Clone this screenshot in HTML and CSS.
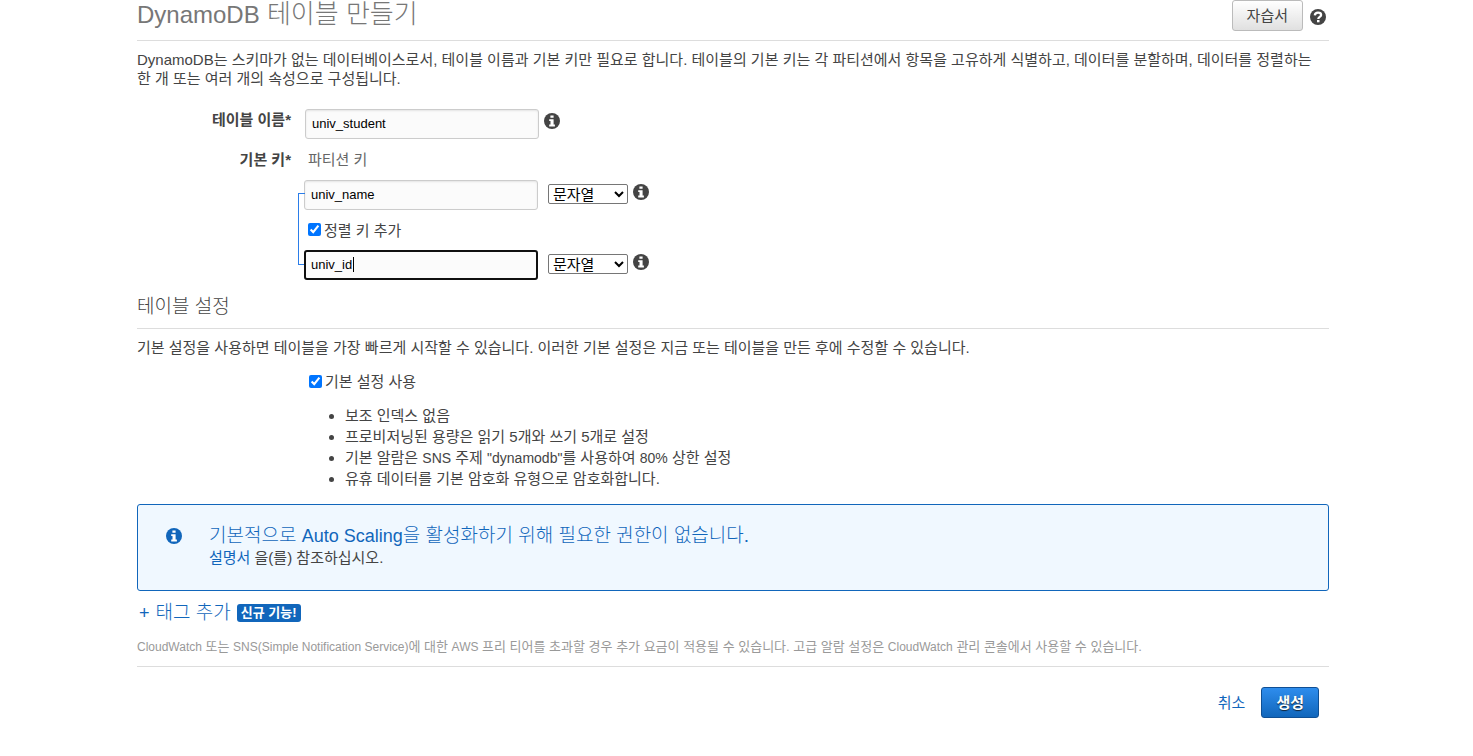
FILE: index.html
```html
<!DOCTYPE html>
<html lang="ko">
<head>
<meta charset="utf-8">
<meta name="viewport" content="width=device-width, initial-scale=1">
<title>DynamoDB 테이블 만들기</title>
<link rel="stylesheet" href="styles.css">
</head>
<body>
<svg class="sprite" aria-hidden="true">
  <symbol id="info" viewBox="0 0 16 16"><circle cx="8" cy="8" r="8" fill="currentColor"/><path fill="#fff" d="M6.400 2.400h3.200v2.400H6.400zM5.200 6.200h4.400v5.400h1.300v1.800H5.200v-1.800h1.300V8H5.200z"/></symbol>
  <symbol id="help" viewBox="0 0 16 16"><circle cx="8" cy="8" r="8" fill="currentColor"/><path fill="none" stroke="#fff" stroke-width="2.300" d="M4.800 6.300C5 4.500 6.300 3.700 8 3.700c1.900 0 3.100.900 3.100 2.300 0 1.900-2.800 1.900-2.800 3.900"/><path fill="#fff" d="M7 11h2.500v2.300H7z"/></symbol>
</svg>
<main class="page">
  <header class="header">
    <h1 class="title"><span class="title-en">DynamoDB</span> 테이블 만들기</h1>
    <div class="header-actions">
      <button class="button" type="button">자습서</button>
      <svg class="icon" role="img" aria-label="도움말"><use href="#help"/></svg>
    </div>
  </header>
  <p class="intro">DynamoDB는 스키마가 없는 데이터베이스로서, 테이블 이름과 기본 키만 필요로 합니다. 테이블의 기본 키는 각 파티션에서 항목을 고유하게 식별하고, 데이터를 분할하며, 데이터를 정렬하는 한 개 또는 여러 개의 속성으로 구성됩니다.</p>

  <form class="form" id="create-form">
    <label class="label" for="table-name">테이블 이름*</label>
    <div class="row name-row">
      <input class="input" id="table-name" type="text" value="univ_student">
      <svg class="icon" aria-hidden="true"><use href="#info"/></svg>
    </div>
    <span class="label">기본 키*</span>
    <label class="key-title" for="partition-key">파티션 키</label>
    <div class="keys">
      <div class="row">
        <input class="input" id="partition-key" type="text" value="univ_name">
        <select class="select" aria-label="파티션 키 유형"><option>문자열</option></select>
        <svg class="icon" aria-hidden="true"><use href="#info"/></svg>
      </div>
      <label class="check"><input class="checkbox" type="checkbox" checked>정렬 키 추가</label>
      <div class="row">
        <span class="field"><input class="input" id="sort-key" type="text" value="univ_id" aria-label="정렬 키"></span>
        <select class="select" aria-label="정렬 키 유형"><option>문자열</option></select>
        <svg class="icon" aria-hidden="true"><use href="#info"/></svg>
      </div>
    </div>
  </form>

  <h2 class="section-title">테이블 설정</h2>
  <p class="settings-text">기본 설정을 사용하면 테이블을 가장 빠르게 시작할 수 있습니다. 이러한 기본 설정은 지금 또는 테이블을 만든 후에 수정할 수 있습니다.</p>
  <div class="defaults">
    <label class="check"><input class="checkbox" type="checkbox" checked>기본 설정 사용</label>
    <ul class="list">
      <li>보조 인덱스 없음</li>
      <li>프로비저닝된 용량은 읽기 5개와 쓰기 5개로 설정</li>
      <li>기본 알람은 <span class="en">SNS</span> 주제 <span class="en">"dynamodb"</span>를 사용하여 <span class="en">80%</span> 상한 설정</li>
      <li>유휴 데이터를 기본 암호화 유형으로 암호화합니다.</li>
    </ul>
  </div>

  <section class="alert">
    <svg class="icon" aria-hidden="true"><use href="#info"/></svg>
    <div>
      <h3 class="alert-title">기본적으로 <span class="alert-en">Auto Scaling</span>을 활성화하기 위해 필요한 권한이 없습니다.</h3>
      <p class="alert-text"><a class="link" href="#">설명서</a> 을(를) 참조하십시오.</p>
    </div>
  </section>

  <div class="tags"><button class="tag-button" type="button"><span class="plus">+</span>태그 추가</button><span class="badge">신규 기능!</span></div>
  <p class="note"><span class="note-en">CloudWatch</span> 또는 <span class="note-en">SNS(Simple Notification Service)</span>에 대한 <span class="note-en">AWS</span> 프리 티어를 초과할 경우 추가 요금이 적용될 수 있습니다. 고급 알람 설정은 <span class="note-en">CloudWatch</span> 관리 콘솔에서 사용할 수 있습니다.</p>
  <footer class="footer">
    <a class="link" href="#">취소</a>
    <button class="button primary" type="submit" form="create-form">생성</button>
  </footer>
</main>
<script src="script.js"></script>
</body>
</html>
```
FILE: styles.css
```css
* { box-sizing: border-box; }
body {
  margin: 0;
  background: #fff;
  color: #444;
  font: 400 15px/19px "Liberation Sans", "Noto Sans CJK KR", sans-serif;
}
h1, h2, h3, p, ul { margin: 0; font-weight: inherit; }
button, input, select { font-family: inherit; font-weight: inherit; }
.sprite { display: none; }
.page { padding: 0 144px 24px 137px; }
.icon { width: 16px; height: 16px; flex: none; color: #444; }
.en { font-size: 14px; line-height: 1; }

.header {
  display: flex;
  justify-content: space-between;
  align-items: flex-start;
  height: 41px;
  border-bottom: 1px solid #ddd;
}
.title { font-size: 26px; font-weight: 300; line-height: 28px; color: #777; }
.title-en { font-size: 24px; line-height: 1; }
.header-actions { display: flex; align-items: center; gap: 7px; padding-right: 3px; }
.header-actions .icon { margin-top: 3px; }
.button {
  height: 31px;
  padding: 0 14px 3px;
  border: 1px solid #bbb;
  border-radius: 3px;
  background: linear-gradient(#fff, #e0e0e0);
  color: #444;
  font-size: 15px;
}
.intro { margin-top: 9px; padding-right: 12px; word-break: keep-all; }

.form {
  display: grid;
  grid-template-columns: 154px 1fr;
  column-gap: 13px;
  margin-top: 21px;
}
.label { padding-top: 1px; text-align: right; font-weight: 700; }
.row { display: flex; align-items: center; height: 30px; }
.name-row { padding-left: 1px; }
.row .icon { margin: 0 0 6px 5px; }
.input {
  width: 234px;
  height: 30px;
  padding: 0 6px 2px;
  border: 1px solid #ccc;
  border-radius: 3px;
  background: #fbfbfb;
  box-shadow: inset 0 1px 2px #e4e4e4;
  color: #000;
  font-size: 13px;
}
.input:focus {
  padding: 0 5px 2px;
  border: 2px solid #101010;
  outline: none;
  box-shadow: none;
  caret-color: transparent;
}
.field { position: relative; display: flex; }
.field:focus-within::after {
  content: "";
  position: absolute;
  left: 49px;
  top: 7px;
  width: 1px;
  height: 15px;
  background: #000;
}
.form > span.label, .key-title { padding-top: 11px; }
.key-title { padding-left: 4px; color: #666; }
.keys { grid-column: 2; position: relative; margin-top: 11px; }
.keys::before {
  content: "";
  position: absolute;
  left: -6px;
  top: 13px;
  bottom: 15px;
  width: 6px;
  border: 1px solid #2b7de9;
  border-right: 0;
}
.select {
  width: 80px;
  height: 20px;
  margin: 0 0 2px 10px;
  padding: 0 0 1px;
  border: 1px solid #767676;
  border-radius: 2px;
  background: #fff;
  color: #000;
  font-size: 15px;
  line-height: 18px;
}
.check { display: flex; align-items: center; gap: 3px; }
.checkbox { width: 13px; height: 13px; margin: 0 0 1px; accent-color: #0075ff; }
.keys .check { height: 40px; padding-left: 4px; }

.section-title {
  margin-top: 12px;
  padding-bottom: 7px;
  border-bottom: 1px solid #ddd;
  font-size: 19px;
  font-weight: 300;
  line-height: 29px;
}
.settings-text { margin-top: 9px; }
.defaults { padding: 15px 0 0 172px; }
.list { margin-top: 14px; padding-left: 36px; line-height: 21px; }

.alert {
  display: flex;
  gap: 27px;
  min-height: 87px;
  margin-top: 15px;
  padding: 19px 28px;
  border: 1px solid #1166bb;
  border-radius: 3px;
  background: #f0f8ff;
}
.alert .icon { margin-top: 4px; color: #1166bb; }
.alert-title { font-size: 19px; font-weight: 300; line-height: 24px; color: #1166bb; }
.alert-en { font-size: 18px; line-height: 1; }
.link { color: #1166bb; text-decoration: none; }
.tags { display: flex; align-items: center; gap: 6px; margin-top: 8px; }
.tag-button {
  padding: 0 0 0 2px;
  border: 0;
  background: none;
  color: #1166bb;
  font-size: 19px;
  font-weight: 300;
  line-height: 28px;
}
.plus { margin-right: 6px; font-size: 18px; line-height: 1; }
.badge {
  padding: 0 4px;
  border-radius: 3px;
  background: #1166bb;
  color: #fff;
  font-size: 13px;
  font-weight: 700;
  line-height: 18px;
}
.note {
  margin-top: 10px;
  padding-bottom: 10px;
  border-bottom: 1px solid #ddd;
  color: #999;
  font-size: 13px;
}
.note-en { font-size: 12px; line-height: 1; }
.footer {
  display: flex;
  justify-content: flex-end;
  align-items: center;
  gap: 16px;
  padding: 20px 10px 0 0;
}
.primary {
  border-color: #0f4f94;
  background: linear-gradient(#2e8ded, #1166bb);
  color: #fff;
  font-weight: 700;
  text-shadow: 0 1px 1px #123;
}
```
FILE: script.js
```js
const sortKey = document.getElementById("sort-key");
sortKey.focus();
sortKey.setSelectionRange(sortKey.value.length, sortKey.value.length);
```
